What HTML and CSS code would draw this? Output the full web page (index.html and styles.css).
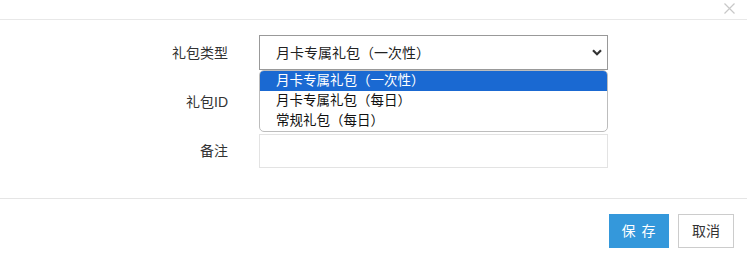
FILE: index.html
```html
<!DOCTYPE html>
<html>
<head>
<meta charset="utf-8">
<link rel="stylesheet" href="styles.css">
</head>
<body>
<div class="dialog">
  <div class="header">
    <span class="close" aria-label="close">
      <svg width="11" height="11" viewBox="0 0 11 11"><path d="M0.5 0.5L10.5 10.5M10.5 0.5L0.5 10.5" stroke="#c8c8c8" stroke-width="1.2" fill="none"/></svg>
    </span>
  </div>
  <div class="form">
    <div class="row row-select">
      <label class="label">礼包类型</label>
      <div class="field field-select">
        <div class="select">
          <span class="select-text">月卡专属礼包（一次性）</span>
          <svg class="chevron" width="10" height="7" viewBox="0 0 10 7"><path d="M1 1.2L5 5.2L9 1.2" stroke="#333" stroke-width="2.2" fill="none"/></svg>
        </div>
        <ul class="options">
          <li class="option selected">月卡专属礼包（一次性）</li>
          <li class="option">月卡专属礼包（每日）</li>
          <li class="option">常规礼包（每日）</li>
        </ul>
      </div>
    </div>
    <div class="row">
      <label class="label">礼包ID</label>
      <div class="field"><div class="input"></div></div>
    </div>
    <div class="row">
      <label class="label">备注</label>
      <div class="field"><div class="input"></div></div>
    </div>
  </div>
  <div class="footer">
    <button class="btn btn-primary">保 存</button>
    <button class="btn btn-default">取消</button>
  </div>
</div>
</body>
</html>
```
FILE: styles.css
```css
html, body {
  margin: 0;
  padding: 0;
  background: #fff;
}
body {
  font-family: "Liberation Sans", "Noto Sans CJK SC", sans-serif;
  font-size: 14px;
  color: #333;
}
.dialog {
  width: 747px;
  height: 256px;
  position: relative;
}
.header {
  height: 19px;
  border-bottom: 1px solid #e8e8e8;
}
.close {
  position: absolute;
  top: 3px;
  left: 724px;
  width: 11px;
  height: 11px;
  display: block;
}
.close svg { display: block; }
.form {
  padding: 15px 0 30px 0;
  display: flex;
  flex-direction: column;
  gap: 15px;
}
.row {
  display: flex;
  align-items: center;
  height: 34px;
}
.row-select {
  height: 35px;
}
.label {
  text-align: right;
  padding-right: 31px;
  box-sizing: border-box;
  width: 259px;
  line-height: 20px;
  color: #333;
}
.field {
  position: relative;
  width: 349px;
  height: 34px;
}
.field-select {
  height: 35px;
}
.select {
  box-sizing: border-box;
  height: 35px;
  border: 1px solid #999;
  display: flex;
  align-items: center;
  padding: 0 0 0 16px;
  background: #fff;
}
.select-text {
  flex: 1;
  line-height: 20px;
  color: #222;
}
.chevron {
  margin-right: 5px;
  display: block;
}
.input {
  box-sizing: border-box;
  height: 34px;
  border: 1px solid #e3e3e3;
  background: #fff;
}
.options {
  position: absolute;
  top: 35px;
  left: 0;
  width: 349px;
  box-sizing: border-box;
  margin: 0;
  padding: 0;
  list-style: none;
  border: 1px solid #bdbdbd;
  border-radius: 5px;
  overflow: hidden;
  background: #fff;
  z-index: 2;
}
.option {
  height: 20px;
  line-height: 20px;
  padding-left: 16px;
  font-size: 13.5px;
  color: #111;
}
.option.selected {
  background: #1a69d2;
  color: #fff;
}
.footer {
  border-top: 1px solid #e5e5e5;
  padding: 15px 13px 0 0;
  display: flex;
  justify-content: flex-end;
  gap: 9px;
}
.btn {
  height: 34px;
  font-family: "Liberation Sans", "Noto Sans CJK SC", sans-serif;
  font-size: 14px;
  padding: 0;
  cursor: pointer;
  line-height: 20px;
}
.btn-primary {
  width: 60px;
  background: #3498db;
  border: 1px solid #3498db;
  color: #fff;
  letter-spacing: 1px;
}
.btn-default {
  width: 56px;
  background: #fff;
  border: 1px solid #ccc;
  color: #333;
}
```
